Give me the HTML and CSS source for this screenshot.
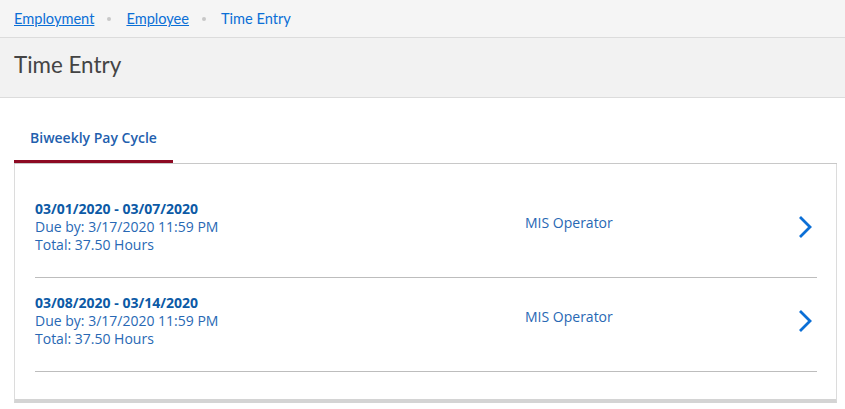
FILE: index.html
```html
<!DOCTYPE html>
<html>
<head>
<meta charset="utf-8">
<link rel="stylesheet" href="styles.css">
</head>
<body>
<nav class="crumbs">
  <a class="crumb-link" href="#">Employment</a>
  <span class="dot"></span>
  <a class="crumb-link" href="#">Employee</a>
  <span class="dot"></span>
  <span class="crumb-current">Time Entry</span>
</nav>
<header class="title-band">
  <h1 class="page-title">Time Entry</h1>
</header>
<main class="content">
  <div class="tabs">
    <div class="tab active">Biweekly Pay Cycle</div>
  </div>
  <section class="card">
    <div class="row">
      <div class="period">
        <div class="dates">03/01/2020 - 03/07/2020</div>
        <div class="meta">Due by: 3/17/2020 11:59 PM</div>
        <div class="meta">Total: 37.50 Hours</div>
      </div>
      <div class="role">MIS Operator</div>
      <svg class="chev" width="14" height="24" viewBox="0 0 14 24"><path d="M2 2 L12 12 L2 22" fill="none" stroke="#0b6fd6" stroke-width="2.8"/></svg>
    </div>
    <div class="row">
      <div class="period">
        <div class="dates">03/08/2020 - 03/14/2020</div>
        <div class="meta">Due by: 3/17/2020 11:59 PM</div>
        <div class="meta">Total: 37.50 Hours</div>
      </div>
      <div class="role">MIS Operator</div>
      <svg class="chev" width="14" height="24" viewBox="0 0 14 24"><path d="M2 2 L12 12 L2 22" fill="none" stroke="#0b6fd6" stroke-width="2.8"/></svg>
    </div>
  </section>
</main>
</body>
</html>
```
FILE: styles.css
```css
html, body { margin: 0; padding: 0; background: #fff; }
body { font-family: "Open Sans", "Liberation Sans", sans-serif; }

.crumbs {
  height: 37px;
  background: #f5f5f5;
  border-bottom: 1px solid #dcdcdc;
  display: flex;
  align-items: center;
  padding: 0 14px;
  font-family: Lato, "Liberation Sans", sans-serif;
  font-size: 14.6px;
}
.crumb-link { color: #0b6fd6; text-decoration: underline; }
.crumb-current { color: #0b6fd6; }
.dot {
  width: 4px; height: 4px; border-radius: 50%;
  background: #c8c8c8;
  margin: 0 15px 0 13px;
}

.title-band {
  height: 59px;
  background: #f2f2f2;
  border-bottom: 1px solid #dcdcdc;
  display: flex;
  align-items: center;
  padding: 0 14px;
}
.page-title {
  margin: 0 0 6px 0;
  font-family: Lato, "Liberation Sans", sans-serif;
  font-weight: 400;
  font-size: 22.4px;
  color: #444;
}

.content { padding: 0 8px 0 14px; }

.tabs {
  display: flex;
  border-bottom: 1px solid #c8c8c8;
}
.tab {
  width: 159px;
  height: 65px;
  box-sizing: border-box;
  padding: 30px 0 0 16px;
  font-size: 14px;
  line-height: 20px;
  font-weight: 600;
  color: #1f5fae;
}
.tab.active { border-bottom: 3px solid #8d0a23; }

.card {
  border-left: 1px solid #dcdcdc;
  border-right: 1px solid #dcdcdc;
  border-bottom: 4px solid #d4d4d4;
  padding: 20px 19px 27px 20px;
}
.row {
  display: flex;
  align-items: center;
  border-bottom: 1px solid #bdbdbd;
  padding: 16px 0 23px 0;
}
.period { width: 490px; }
.dates { font-size: 14px; font-weight: 700; color: #0c5aa6; line-height: 18px; }
.meta { font-size: 14px; color: #2868b4; line-height: 18px; }
.role { flex: 1; font-size: 14px; color: #2868b4; margin-top: -9px; }
.chev { margin-right: 5px; margin-top: 0; }
```
